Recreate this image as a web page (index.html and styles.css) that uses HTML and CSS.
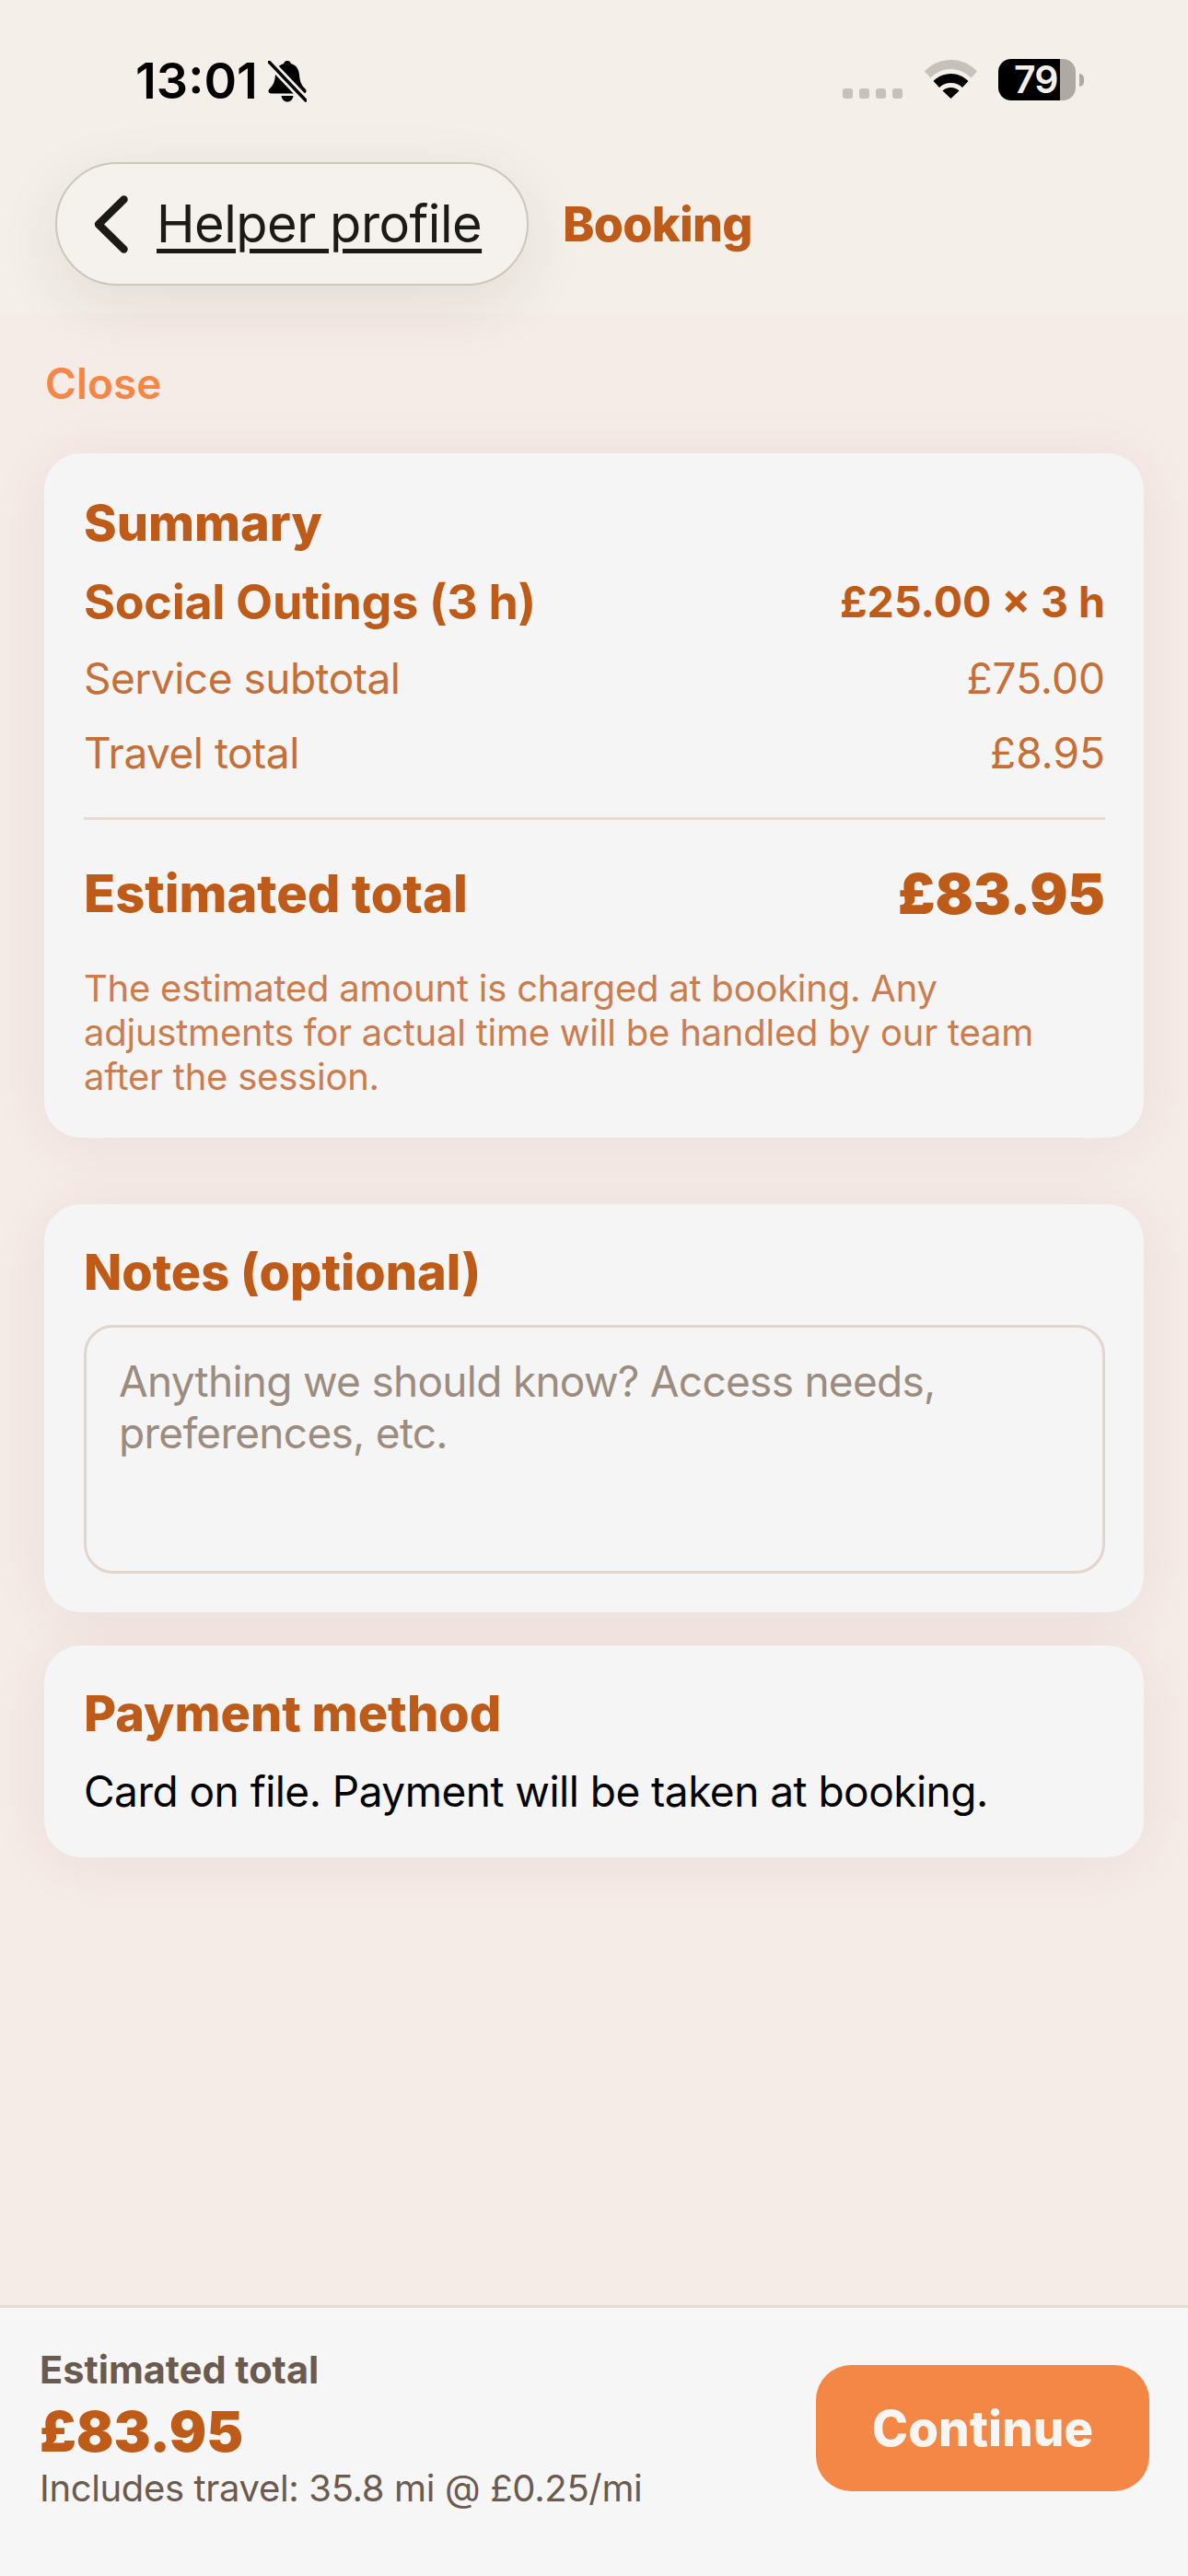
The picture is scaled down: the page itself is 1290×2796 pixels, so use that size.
FILE: index.html
```html
<!DOCTYPE html>
<html lang="en">

<head>
  <meta charset="UTF-8">
  <meta name="viewport" content="width=device-width, initial-scale=1">
  <title>Booking</title>
  <link rel="stylesheet" href="styles.css">
</head>

<body>

  <header class="top">
    <div class="status-bar">
      <div class="status-left">
        <span class="time">13:01</span>
        <svg class="bell" width="42" height="45" viewBox="0 0 42 45">
          <path d="M21 0c-2 0-3.500 1.200-3.800 3C11.500 4.500 8.500 9 8 15c-.5 7-2 11-6 15-1.200 1.200-1.500 2-1.500 3 0 1.600 1.200 2.500 3 2.500h35c1.800 0 3-.9 3-2.500 0-1-.3-1.800-1.500-3-4-4-5.500-8-6-15-.5-6-3.500-10.500-9.200-12C24.500 1.200 23 0 21 0z" fill="#000"/>
          <path d="M14.500 38h13c-.5 4-3.200 6.500-6.500 6.500s-6-2.500-6.500-6.500z" fill="#000"/>
          <path d="M1 1l40 42" stroke="#f4efe9" stroke-width="9" fill="none"/>
          <path d="M1 1l40 42" stroke="#000" stroke-width="3.500" stroke-linecap="round" fill="none"/>
        </svg>
      </div>
      <div class="status-right">
        <div class="signal"><i></i><i></i><i></i><i></i></div>
        <svg class="wifi" width="57" height="42" viewBox="0 0 57 42">
          <path d="M0 12.500C7 4.800 17.200 0 28.500 0S50 4.800 57 12.500l-6.500 7C44.800 13.600 37 10 28.500 10S12.200 13.600 6.500 19.500z" fill="#c6c1bb"/>
          <path d="M9.500 23C14.500 18 21 15 28.500 15s14 3 19 8l-6.500 7c-3.300-3.200-7.600-5-12.500-5s-9.200 1.800-12.500 5z" fill="#000"/>
          <path d="M19.500 33.500c2.400-2.200 5.500-3.500 9-3.500s6.600 1.300 9 3.500L28.500 42z" fill="#000"/>
        </svg>
        <div class="battery">
          <div class="battery-body"><span class="battery-level">79</span></div>
          <div class="battery-nub"></div>
        </div>
      </div>
    </div>

    <nav class="nav-row">
      <a class="back-pill">
        <svg class="chevron" width="37" height="63" viewBox="0 0 37 63">
          <path d="M32.500 4.500L5 31.500l27.500 27" stroke="#1c1a15" stroke-width="8.500" stroke-linecap="round" stroke-linejoin="round" fill="none"/>
        </svg>
        <span class="back-label">Helper profile</span>
      </a>
      <span class="nav-title">Booking</span>
    </nav>
  </header>

  <main class="sheet">
    <div class="close-link">Close</div>

    <section class="card summary">
      <h2 class="card-title">Summary</h2>
      <div class="row row-service">
        <span>Social Outings (3 h)</span>
        <span class="service-rate">£25.00 × 3 h</span>
      </div>
      <div class="row row-line row-subtotal">
        <span class="line-label">Service subtotal</span>
        <span>£75.00</span>
      </div>
      <div class="row row-line row-travel">
        <span class="line-label">Travel total</span>
        <span>£8.95</span>
      </div>
      <hr class="divider">
      <div class="row row-total">
        <span>Estimated total</span>
        <span class="total-amount">£83.95</span>
      </div>
      <p class="fine-print">The estimated amount is charged at booking. Any adjustments for actual time will be handled by our team after the session.</p>
    </section>

    <section class="card notes">
      <h2 class="card-title">Notes (optional)</h2>
      <div class="notes-box">Anything we should know? Access needs, preferences, etc.</div>
    </section>

    <section class="card payment">
      <h2 class="card-title">Payment method</h2>
      <p class="payment-text">Card on file. Payment will be taken at booking.</p>
    </section>
  </main>

  <footer class="bottom-bar">
    <div class="bottom-info">
      <div class="bottom-label">Estimated total</div>
      <div class="bottom-amount">£83.95</div>
      <div class="bottom-travel">Includes travel: 35.8 mi @ £0.25/mi</div>
    </div>
    <button class="continue">Continue</button>
  </footer>

</body>

</html>
```

FILE: styles.css
```css
* {
  box-sizing: border-box;
}

html,
body {
  margin: 0;
  padding: 0;
}

body {
  width: 1290px;
  height: 2796px;
  display: flex;
  flex-direction: column;
  overflow: hidden;
  background: #f5ebe7;
  font-family: Inter, "Liberation Sans", sans-serif;
}

/* Top area */
.top {
  height: 340px;
  flex: none;
  background: #f4efe9;
  position: relative;
  z-index: 2;
}

.status-bar {
  height: 176px;
  padding: 64px 113px 0 147px;
  display: flex;
  justify-content: space-between;
  align-items: flex-start;
}

.status-left {
  display: flex;
  align-items: center;
  gap: 11px;
}

.time {
  font-size: 54px;
  line-height: 48px;
  font-weight: 600;
  letter-spacing: 0;
  color: #000;
}

.status-right {
  display: flex;
  align-items: flex-end;
  height: 45px;
}

.signal {
  display: flex;
  gap: 7px;
  margin-right: 24px;
  margin-bottom: 2px;
}

.signal i {
  width: 11px;
  height: 11px;
  border-radius: 3px;
  background: #c6c1bb;
}

.wifi {
  margin-right: 23px;
  margin-bottom: 2px;
}

.battery {
  display: flex;
  align-items: center;
  gap: 4px;
}

.battery-body {
  width: 84px;
  height: 45px;
  border-radius: 14px;
  background: linear-gradient(to right, #000 80%, #aeaaa3 80%);
  display: flex;
  align-items: center;
  padding-left: 17px;
}

.battery-level {
  color: #f4efe9;
  font-size: 41px;
  line-height: 45px;
  font-weight: 600;
  letter-spacing: -1px;
}

.battery-nub {
  width: 5px;
  height: 14px;
  border-radius: 0 5px 5px 0;
  background: #aeaaa3;
}

.nav-row {
  display: flex;
  align-items: center;
  gap: 37px;
  padding-left: 60px;
}

.back-pill {
  width: 514px;
  height: 134px;
  padding-left: 40px;
  display: flex;
  align-items: center;
  gap: 31px;
  background: #f5f2ed;
  border: 2px solid #cbc6be;
  border-radius: 67px;
  box-shadow: 0 20px 70px rgba(60, 40, 20, 0.09);
}

.back-label {
  font-size: 56px;
  font-weight: 400;
  letter-spacing: -0.5px;
  color: #1c1a15;
  text-decoration: underline;
  text-decoration-thickness: 5px;
  text-underline-offset: 7px;
}

.nav-title {
  font-size: 52px;
  font-weight: 800;
  letter-spacing: -0.7px;
  color: #bf5b18;
}

/* Main sheet */
.sheet {
  flex: 1;
  padding: 0 48px;
  display: flex;
  flex-direction: column;
}

.close-link {
  height: 152px;
  padding: 48px 0 0 1px;
  font-size: 46px;
  line-height: 56px;
  font-weight: 600;
  color: #f58746;
}

.card {
  background: #f5f5f5;
  border-radius: 40px;
  padding: 0 42px 0 43px;
  box-shadow: 0 6px 70px rgba(100, 40, 40, 0.06);
}

.card-title {
  margin: 0;
  font-size: 54px;
  line-height: 60px;
  font-weight: 800;
  color: #bf5b18;
}

.summary {
  height: 743px;
  padding-top: 46px;
}

.row {
  display: flex;
  justify-content: space-between;
  align-items: center;
  color: #bf5b18;
}

.row-service {
  margin-top: 25px;
  height: 60px;
  font-size: 52px;
  font-weight: 700;
  letter-spacing: -0.3px;
}

.service-rate {
  font-size: 46.5px;
  letter-spacing: 0;
}

.row-line {
  height: 60px;
  font-size: 46px;
  font-weight: 400;
  color: #c66f37;
}

.line-label {
  letter-spacing: -0.5px;
}

.row-subtotal {
  margin-top: 23px;
}

.row-travel {
  margin-top: 21px;
}

.divider {
  margin: 40px 0 0;
  border: none;
  height: 3px;
  background: #e5dbd2;
}

.row-total {
  margin-top: 44px;
  height: 72px;
  font-size: 56px;
  font-weight: 800;
}

.total-amount {
  font-size: 61px;
  font-weight: 900;
}

.fine-print {
  margin: 43px 0 0;
  font-size: 40px;
  line-height: 48px;
  letter-spacing: -0.23px;
  color: #cb7d4f;
}

.notes {
  margin-top: 72px;
  height: 443px;
  padding-top: 44px;
}

.notes-box {
  margin-top: 27px;
  height: 270px;
  border: 3px solid #e2d5cc;
  border-radius: 32px;
  padding: 30px 35px;
  font-size: 46px;
  line-height: 56px;
  letter-spacing: -0.72px;
  color: #9c8c80;
}

.payment {
  margin-top: 36px;
  height: 230px;
  padding-top: 44px;
}

.payment-text {
  margin: 26px 0 0;
  font-size: 46px;
  line-height: 56px;
  letter-spacing: -0.52px;
  color: #000;
}

/* Bottom bar */
.bottom-bar {
  height: 294px;
  flex: none;
  background: #f6f6f6;
  border-top: 3px solid #e5dcd4;
  display: flex;
  justify-content: space-between;
  padding: 37px 42px 0 43px;
}

.bottom-label {
  font-size: 41.5px;
  line-height: 60px;
  font-weight: 700;
  color: #6b5a4f;
}

.bottom-amount {
  margin-top: 1px;
  font-size: 60px;
  line-height: 72px;
  font-weight: 900;
  color: #bf5b18;
}

.bottom-travel {
  font-size: 40px;
  line-height: 52px;
  letter-spacing: -0.35px;
  color: #6b5a4f;
}

.continue {
  width: 362px;
  height: 137px;
  margin-top: 25px;
  border: none;
  border-radius: 38px;
  background: #f58746;
  color: #f8f6f2;
  font-family: inherit;
  font-size: 53px;
  font-weight: 800;
}
```
